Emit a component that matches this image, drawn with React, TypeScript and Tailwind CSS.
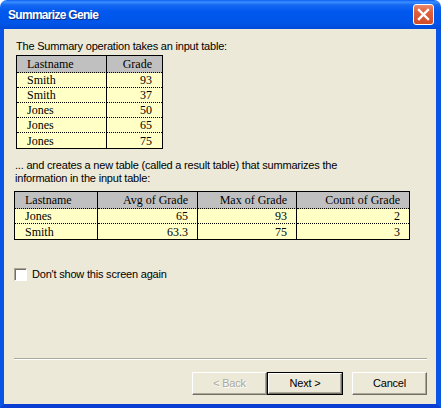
import React from "react";

const sans = "font-['Liberation_Sans',Arial,sans-serif]";
const serif = "font-['Liberation_Serif','Times_New_Roman',serif]";
const dots = "bg-[#ffffc6]";

type Col = { right?: boolean };

function DataTable({
  cols,
  head,
  rows,
  width,
  colsClass,
  padR,
}: {
  cols: Col[];
  head: string[];
  rows: string[][];
  width: string;
  colsClass: string;
  padR: string;
}) {
  const all = [head, ...rows];
  return (
    <div className={`grid border border-black ${width} ${colsClass} ${serif} text-[12px] leading-none text-black`}>
      {all.map((r, ri) =>
        r.map((v, ci) => {
          const isHead = ri === 0;
          const isLast = ri === all.length - 1;
          const lastCol = ci === cols.length - 1;
          return (
            <div
              key={`${ri}-${ci}`}
              className={[
                "flex items-center",
                isHead ? "h-[17px] bg-[#c0c0c0]" : `h-[15px] ${dots}`,
                isLast ? "" : "border-b border-dotted border-b-black",
                lastCol ? "" : "border-r border-r-black [border-right-style:solid]",
                cols[ci].right ? `justify-end ${padR}` : "pl-[10px]",
              ].join(" ")}
            >
              {v}
            </div>
          );
        })
      )}
    </div>
  );
}

function Btn({ children, disabled, isDefault }: { children: React.ReactNode; disabled?: boolean; isDefault?: boolean }) {
  const inner = (
    <div
      className={`flex h-full w-full items-center justify-center border border-t-white border-l-white border-b-[#716f64] border-r-[#716f64] bg-[#ece9d8] shadow-[inset_-1px_-1px_0_#aca899] ${
        disabled ? "text-[#aca899] [text-shadow:1px_1px_0_#ffffff]" : "text-black"
      }`}
    >
      {children}
    </div>
  );
  if (isDefault) {
    return <div className="h-[23px] w-[76px] border border-black">{inner}</div>;
  }
  return <div className="h-[23px] w-[75px]">{inner}</div>;
}

export default function App() {
  return (
    <div className={`flex h-[408px] w-[441px] flex-col overflow-hidden rounded-t-[7px] bg-white ${sans}`}>
      {/* title bar */}
      <div className="flex h-[29px] shrink-0 items-center justify-between bg-[linear-gradient(to_bottom,#0a5df5_0%,#3b8fff_7%,#1668f2_17%,#0058ee_40%,#0055e8_80%,#0049d9_100%)] pl-[8px] pr-[7px]">
        <span className="pt-[1px] text-[12px] font-bold leading-none tracking-[-0.7px] text-white [text-shadow:1px_1px_0_#0a2c8c]">
          Summarize Genie
        </span>
        <div className="flex h-[21px] w-[21px] items-center justify-center rounded-[3px] border border-white bg-[linear-gradient(to_bottom,#ea8a6c_0%,#e0603d_35%,#d24b27_100%)]">
          <svg width="13" height="13" viewBox="0 0 13 13">
            <path d="M2 2 L11 11 M11 2 L2 11" stroke="#ffffff" strokeWidth="2.4" strokeLinecap="square" />
          </svg>
        </div>
      </div>

      {/* body */}
      <div className="flex flex-1 flex-col border-b-4 border-l-4 border-r-[5px] border-b-[#0a3ed2] border-l-[#0854e4] border-r-[#0854e4] bg-[#ece9d8] pb-[9px] pl-[10px] pr-[9px] pt-[11px] text-[11px] leading-[13px] tracking-[-0.2px] text-black">
        <p className="pl-[2px]">The Summary operation takes an input table:</p>
        <div className="ml-[2px] mt-[2px] tracking-normal">
          <DataTable
            cols={[{}, { right: true }]}
            head={["Lastname", "Grade"]}
            rows={[
              ["Smith", "93"],
              ["Smith", "37"],
              ["Jones", "50"],
              ["Jones", "65"],
              ["Jones", "75"],
            ]}
            width="w-[147px]"
            colsClass="grid-cols-[90px_55px]"
            padR="pr-[10px]"
          />
        </div>

        <p className="mt-[10px] pl-[1px]">
          ... and creates a new table (called a result table) that summarizes the
          <br />
          information in the input table:
        </p>
        <div className="mt-[6px] tracking-normal">
          <DataTable
            cols={[{}, { right: true }, { right: true }, { right: true }]}
            head={["Lastname", "Avg of Grade", "Max of Grade", "Count of Grade"]}
            rows={[
              ["Jones", "65", "93", "2"],
              ["Smith", "63.3", "75", "3"],
            ]}
            width="w-[396px]"
            colsClass="grid-cols-[83px_100px_99px_112px]"
            padR="pr-[9px]"
          />
        </div>

        <label className="mt-[28px] flex items-center gap-[5px]">
          <span className="h-[13px] w-[13px] border border-t-[#aca899] border-l-[#aca899] border-b-white border-r-white bg-white shadow-[inset_1px_1px_0_#716f64]" />
          <span>Don't show this screen again</span>
        </label>

        <div className="mt-auto h-[2px] border-t border-b border-t-[#aca899] border-b-white" />

        <div className="mt-[12px] flex justify-end">
          <Btn disabled>&lt; Back</Btn>
          <Btn isDefault>Next &gt;</Btn>
          <div className="ml-[9px]">
            <Btn>Cancel</Btn>
          </div>
        </div>
      </div>
    </div>
  );
}
